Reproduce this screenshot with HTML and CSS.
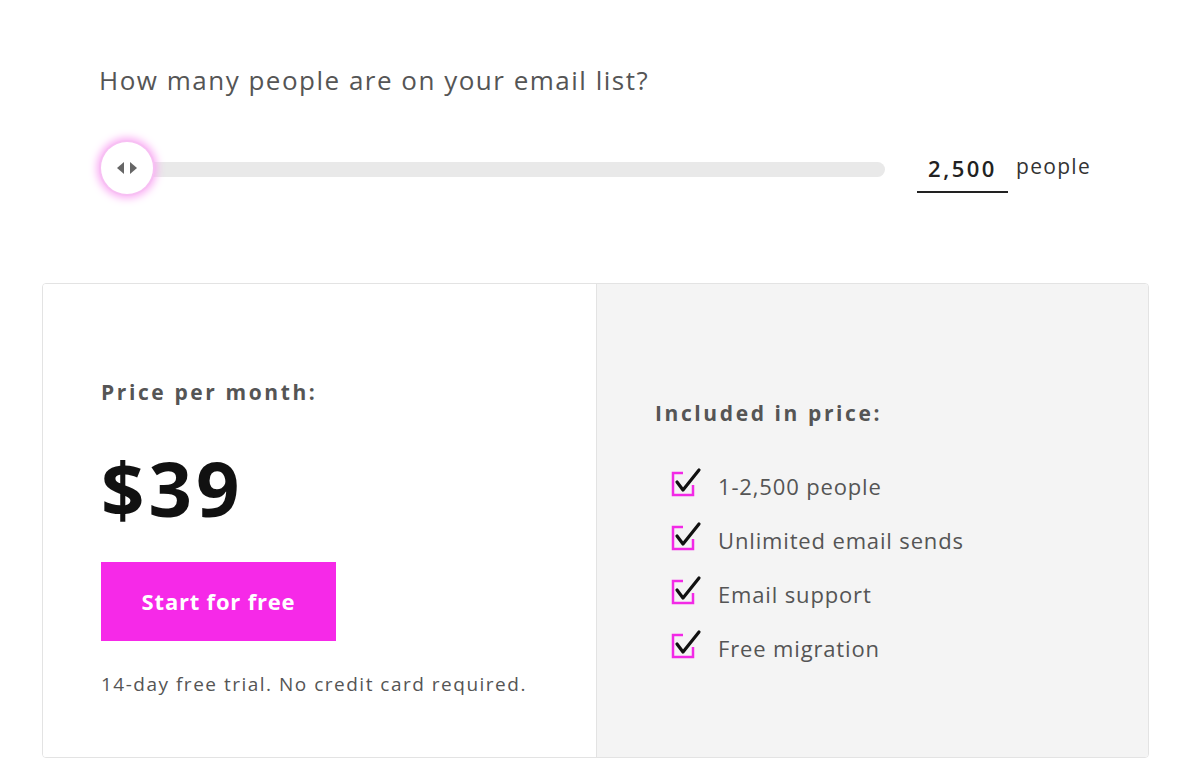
FILE: index.html
```html
<!DOCTYPE html>
<html lang="en">
<head>
  <meta charset="UTF-8" />
  <title>Pricing</title>
  <link rel="stylesheet" href="styles.css">
</head>
<body>
  <div class="pricing">
    <div class="picker">
      <h2 class="question">How many people are on your email list?</h2>
      <div class="slider-row">
        <div class="slider">
          <div class="track"></div>
          <div class="thumb">
            <svg width="32" height="16" viewBox="0 0 32 16">
              <polygon points="6,8 13,2 13,14" fill="#666" />
              <polygon points="26,8 19,2 19,14" fill="#666" />
            </svg>
          </div>
        </div>
        <div class="count">
          <span class="count-value">2,500</span>
          <span class="count-label">people</span>
        </div>
      </div>
    </div>

    <div class="card">
      <div class="card-left">
        <div class="label">Price per month:</div>
        <div class="price">$39</div>
        <a class="btn" href="#">Start for free</a>
        <p class="note">14-day free trial. No credit card required.</p>
      </div>
      <div class="card-right">
        <div class="label">Included in price:</div>
        <ul class="features">
          <li><svg class="tick" width="32" height="32" viewBox="0 0 32 32"><path d="M12 7H2v22h20V19" fill="none" stroke="#f229e6" stroke-width="2.5" /><path d="M6 16l6 8 16-20" fill="none" stroke="#111" stroke-width="3.2" stroke-linecap="round" stroke-linejoin="round" /></svg>1-2,500 people</li>
          <li><svg class="tick" width="32" height="32" viewBox="0 0 32 32"><path d="M12 7H2v22h20V19" fill="none" stroke="#f229e6" stroke-width="2.5" /><path d="M6 16l6 8 16-20" fill="none" stroke="#111" stroke-width="3.2" stroke-linecap="round" stroke-linejoin="round" /></svg>Unlimited email sends</li>
          <li><svg class="tick" width="32" height="32" viewBox="0 0 32 32"><path d="M12 7H2v22h20V19" fill="none" stroke="#f229e6" stroke-width="2.5" /><path d="M6 16l6 8 16-20" fill="none" stroke="#111" stroke-width="3.2" stroke-linecap="round" stroke-linejoin="round" /></svg>Email support</li>
          <li><svg class="tick" width="32" height="32" viewBox="0 0 32 32"><path d="M12 7H2v22h20V19" fill="none" stroke="#f229e6" stroke-width="2.5" /><path d="M6 16l6 8 16-20" fill="none" stroke="#111" stroke-width="3.2" stroke-linecap="round" stroke-linejoin="round" /></svg>Free migration</li>
        </ul>
      </div>
    </div>
  </div>
</body>
</html>
```

FILE: styles.css
```css
body {
  margin: 0;
  background: #fff;
  font-family: "Open Sans", sans-serif;
  color: #555;
}
.pricing {
  padding: 0 45px 0 42px;
}
.picker {
  padding: 62px 58px 0 57px;
}
.question {
  margin: 0;
  font-size: 26px;
  font-weight: 400;
  color: #555;
  line-height: 36px;
  letter-spacing: 1.5px;
}
.slider-row {
  display: flex;
  align-items: center;
  margin-top: 36px;
  height: 70px;
}
.slider {
  position: relative;
  flex: 1;
  height: 58px;
  display: flex;
  align-items: center;
}
.track {
  flex: 1;
  height: 15px;
  background: #e9e9e9;
  border-radius: 8px;
  margin-left: 40px;
}
.thumb {
  position: absolute;
  left: 2px;
  top: 2px;
  width: 52px;
  height: 52px;
  border-radius: 50%;
  background: #fff;
  box-shadow: 0 0 0 2px #f7c0f3, 0 0 8px 4px #f9a9f3;
  display: flex;
  align-items: center;
  justify-content: center;
}
.count {
  display: flex;
  align-items: center;
  margin-left: 32px;
  margin-top: 4px;
}
.count-value {
  display: inline-block;
  width: 91px;
  text-align: center;
  font-size: 22px;
  font-weight: 600;
  color: #222;
  letter-spacing: 2.5px;
  padding: 4px 0 8px;
  border-bottom: 2px solid #222;
}
.count-label {
  margin-left: 8px;
  margin-bottom: 10px;
  font-size: 21px;
  color: #333;
  letter-spacing: 1.3px;
}
.card {
  display: flex;
  margin-top: 79px;
  height: 473px;
  border: 1px solid #e3e3e3;
  border-radius: 4px;
  overflow: hidden;
}
.card-left {
  width: 495px;
  padding: 93px 0 0 58px;
  background: #fff;
  border-right: 1px solid #e3e3e3;
}
.card-right {
  flex: 1;
  padding: 114px 0 0 58px;
  background: #f4f4f4;
}
.label {
  font-size: 21px;
  font-weight: 700;
  letter-spacing: 2.6px;
  color: #555;
  line-height: 30px;
}
.price {
  margin-top: 36px;
  font-size: 76px;
  font-weight: 700;
  color: #111;
  line-height: 90px;
  letter-spacing: 4px;
}
.btn {
  display: inline-block;
  margin-top: 29px;
  width: 235px;
  height: 79px;
  line-height: 79px;
  text-align: center;
  background: #f629e8;
  color: #fff;
  font-size: 22px;
  font-weight: 700;
  letter-spacing: 0.8px;
  text-decoration: none;
}
.note {
  margin: 30px 0 0;
  font-size: 19px;
  color: #555;
  letter-spacing: 1.5px;
}
.features {
  list-style: none;
  margin: 31px 0 0 16px;
  padding: 0;
}
.features li {
  display: flex;
  align-items: center;
  height: 54px;
  font-size: 22px;
  color: #555;
  letter-spacing: 0.85px;
}
.tick {
  margin-right: 15px;
  margin-top: -8px;
}
```
